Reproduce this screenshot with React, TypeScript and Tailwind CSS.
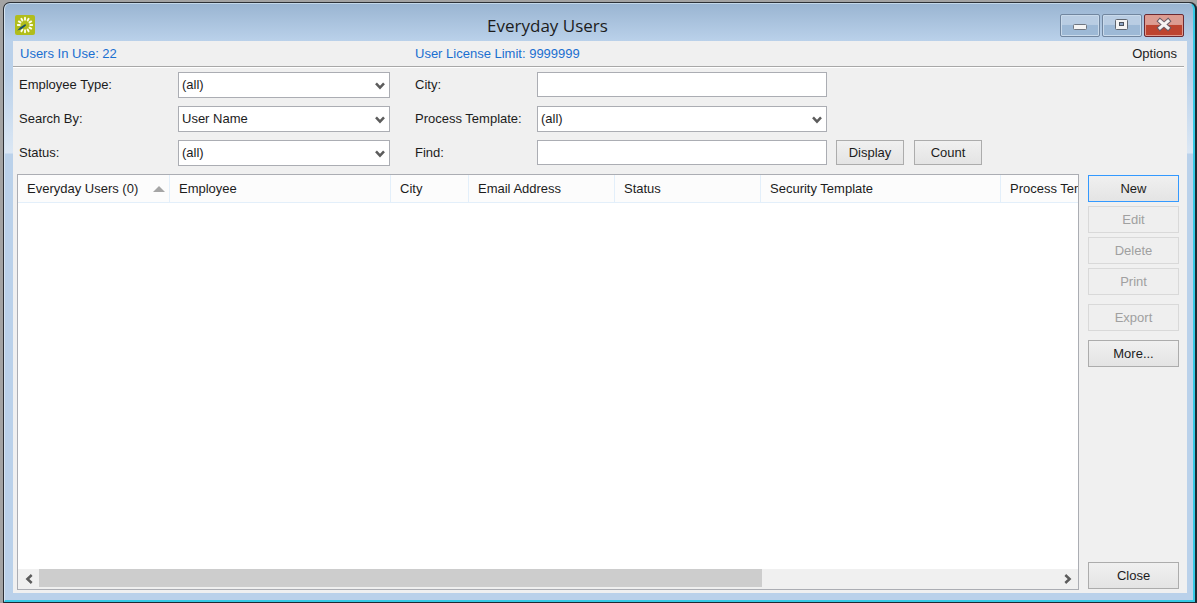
import { useId, type ReactNode } from "react";

const tickAngles = [0, 30, 60, 90, 120, 150, 180, 210, 270, 300, 330];

function AppIcon() {
  return (
    <svg className="h-5 w-5" viewBox="0 0 20 20" aria-hidden="true">
      <rect width="20" height="20" rx="2" fill="#b1bd1b" />
      {tickAngles.map((angle) => (
        <line
          key={angle}
          x1="10"
          y1="2.8"
          x2="10"
          y2="4.8"
          stroke="#fdfde8"
          strokeWidth="1.9"
          strokeLinecap="round"
          transform={`rotate(${angle} 10 10)`}
        />
      ))}
      <path d="M2.2 15.6 L5 12.4 L10.4 9 L11 10.4 L6.4 14.2 Z" fill="#17506b" />
    </svg>
  );
}

function Chevron({ className }: { className: string }) {
  return (
    <svg className={className} viewBox="0 0 10 8" aria-hidden="true">
      <path d="M1 1.3 L5 5.6 L9 1.3" fill="none" stroke="#5c5c5c" strokeWidth="2.5" />
    </svg>
  );
}

const captionBase =
  "flex h-[23px] w-10 items-center justify-center rounded-[2px] border ";

function CaptionButtons() {
  const plain =
    captionBase +
    "border-[#71869f] bg-linear-to-b from-[#b9cde3] from-45% to-[#9db9d6] to-50% shadow-[inset_0_0_0_1px_#c9daeb]";
  return (
    <div className="flex gap-[2px]">
      <button type="button" aria-label="Minimize" className={plain}>
        <svg className="h-4 w-4" viewBox="0 0 16 16">
          <rect x="1.5" y="7.5" width="13" height="5" rx="1" fill="#f4f4f4" stroke="#6f7680" />
        </svg>
      </button>
      <button type="button" aria-label="Maximize" className={plain}>
        <svg className="h-4 w-4" viewBox="0 0 16 16">
          <rect x="1.5" y="2.5" width="12" height="10" rx="1" fill="#f4f4f4" stroke="#5f6670" />
          <rect x="5.5" y="5.5" width="4" height="3" fill="#8ea6c6" stroke="#4c535e" />
        </svg>
      </button>
      <button
        type="button"
        aria-label="Close window"
        className={
          captionBase +
          "border-[#6b2a33] bg-linear-to-b from-[#dc9c92] from-45% to-[#bd4430] to-50% shadow-[inset_0_0_0_1px_#e0998c]"
        }
      >
        <svg className="h-4 w-4" viewBox="0 0 16 16">
          <path d="M4 4 L12 11 M12 4 L4 11" stroke="#6b5b66" strokeWidth="5" strokeLinecap="square" />
          <path d="M4 4 L12 11 M12 4 L4 11" stroke="#f6f3f2" strokeWidth="3" strokeLinecap="square" />
        </svg>
      </button>
    </div>
  );
}

function SelectField({ label, value }: { label: string; value: string }) {
  const id = useId();
  return (
    <>
      <label htmlFor={id}>{label}</label>
      <div className="relative">
        <select
          id={id}
          className="block h-[26px] w-full appearance-none border border-[#abadb3] bg-white pr-6 pb-px pl-[3px]"
          defaultValue={value}
        >
          <option>{value}</option>
        </select>
        <Chevron className="pointer-events-none absolute top-[10px] right-[5px] h-2 w-[10px]" />
      </div>
    </>
  );
}

function TextField({ label }: { label: string }) {
  const id = useId();
  return (
    <>
      <label htmlFor={id}>{label}</label>
      <input id={id} type="text" className="h-[25px] w-full self-start border border-[#abadb3] bg-white px-1" />
    </>
  );
}

type PushButtonProps = { children: ReactNode; disabled?: boolean; primary?: boolean; small?: boolean };

function PushButton({ children, disabled, primary, small }: PushButtonProps) {
  const size = small ? "h-[25px] w-[68px]" : "h-[27px] w-full";
  const look = disabled
    ? "border-[#d9d9d9] bg-[#efefef] text-[#a0a0a0]"
    : primary
      ? "border-[#3399ff] bg-linear-to-b from-[#f0f0f0] to-[#e4e4e4]"
      : "border-[#acacac] bg-linear-to-b from-[#f0f0f0] to-[#e4e4e4]";
  return (
    <button type="button" disabled={disabled} className={`border ${size} ${look}`}>
      {children}
    </button>
  );
}

const columns = ["Everyday Users (0)", "Employee", "City", "Email Address", "Status", "Security Template", "Process Template"];

function UserList() {
  return (
    <section className="flex min-w-0 flex-1 flex-col overflow-hidden border border-[#abadb3] bg-white">
      <div className="flex-1 overflow-hidden">
        <table className="w-[1129px] table-fixed border-separate border-spacing-0 text-left">
          <colgroup>
            <col className="w-[152px]" />
            <col className="w-[221px]" />
            <col className="w-[78px]" />
            <col className="w-[146px]" />
            <col className="w-[146px]" />
            <col className="w-[240px]" />
            <col className="w-[146px]" />
          </colgroup>
          <thead>
            <tr>
              {columns.map((name, index) => (
                <th
                  key={name}
                  scope="col"
                  className="h-7 border-r border-b border-[#e3effa] bg-[#fcfcfc] p-0 pl-[9px] font-normal whitespace-nowrap"
                >
                  <span className="flex items-center justify-between pr-1">
                    {name}
                    {index === 0 && (
                      <svg className="h-[6px] w-3" viewBox="0 0 12 6" aria-label="Sorted ascending">
                        <path d="M0 6 L6 0 L12 6 Z" fill="#a5a5a5" />
                      </svg>
                    )}
                  </span>
                </th>
              ))}
            </tr>
          </thead>
          <tbody />
        </table>
      </div>
      <div className="flex h-5 bg-[#f0f0f0]">
        <button type="button" aria-label="Scroll left" className="flex w-[21px] items-center justify-center">
          <Chevron className="h-2 w-[10px] rotate-90" />
        </button>
        <div className="flex-1 pb-[2px]">
          <div className="h-full w-[71%] bg-[#cdcdcd]" />
        </div>
        <button type="button" aria-label="Scroll right" className="flex w-[21px] items-center justify-center">
          <Chevron className="h-2 w-[10px] -rotate-90" />
        </button>
      </div>
    </section>
  );
}

export default function App() {
  return (
    <div className="flex h-screen min-h-[480px] flex-col bg-[#a3a3a3] pt-[2px] pl-[3px] font-['Liberation_Sans',Arial,sans-serif] text-[13px] leading-4 text-[#1c1c1c]">
      <div className="flex flex-1 flex-col rounded-t-[7px] border-t border-l border-[#2c3036] bg-[#1d2a33] pr-[2px] pb-px">
        <div className="flex flex-1 flex-col rounded-t-[6px] border-t border-r-2 border-b-2 border-l border-t-[#c3d8ea] border-r-[#35c9e4] border-b-[#35c9e4] border-l-[#d5e3f0] bg-[linear-gradient(to_bottom,#9ab5d2_0px,#bad1ea_37px,#bad1ea_70px,#dbe7f4_149px,#bad1ea_150px)] pr-[6px] pb-[7px] pl-2">
          <header className="flex h-[37px] items-center pt-[5px] pr-[3px] pl-[2px]">
            <AppIcon />
            <h1 className="flex-1 pt-[2px] text-center font-['Open_Sans',sans-serif] text-[17px] leading-6">
              Everyday Users
            </h1>
            <CaptionButtons />
          </header>
          <main className="flex flex-1 flex-col bg-[#f0f0f0]">
            <div className="mr-[3px] flex h-[26px] items-center border-b border-[#a8a8a8] pt-px pr-[7px] pl-[7px] text-[#1a6fd0] shadow-[0_1px_0_#ffffff]">
              <span className="w-[395px]">Users In Use: 22</span>
              <span>User License Limit: 9999999</span>
              <button type="button" className="ml-auto text-[#1c1c1c]">
                Options
              </button>
            </div>
            <form className="grid grid-cols-[159px_212px_25px_122px_290px_auto] items-center gap-y-2 pt-[5px] pl-[6px]">
              <SelectField label="Employee Type:" value="(all)" />
              <span />
              <TextField label="City:" />
              <span />
              <SelectField label="Search By:" value="User Name" />
              <span />
              <SelectField label="Process Template:" value="(all)" />
              <span />
              <SelectField label="Status:" value="(all)" />
              <span />
              <TextField label="Find:" />
              <div className="flex gap-[10px] self-start pl-[9px]">
                <PushButton small>Display</PushButton>
                <PushButton small>Count</PushButton>
              </div>
            </form>
            <div className="flex flex-1 gap-[9px] pt-2 pr-2 pb-[3px] pl-1">
              <UserList />
              <nav aria-label="User actions" className="flex w-[91px] flex-col gap-1 pt-px pb-px">
                <PushButton primary>New</PushButton>
                <PushButton disabled>Edit</PushButton>
                <PushButton disabled>Delete</PushButton>
                <PushButton disabled>Print</PushButton>
                <div className="flex flex-1 flex-col gap-[9px] pt-[5px]">
                  <PushButton disabled>Export</PushButton>
                  <PushButton>More...</PushButton>
                </div>
                <PushButton>Close</PushButton>
              </nav>
            </div>
          </main>
        </div>
      </div>
    </div>
  );
}
